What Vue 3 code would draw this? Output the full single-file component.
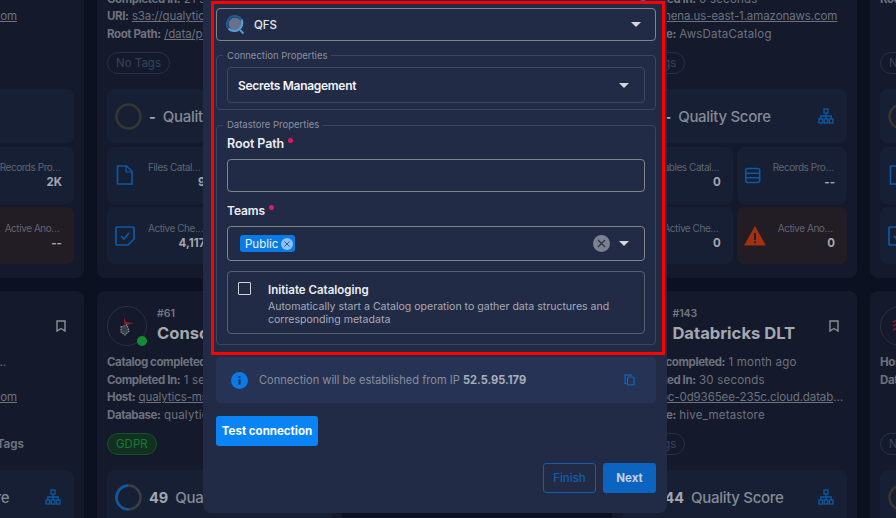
<template>
  <div class="page">
    <!-- cards behind the dialog -->
    <div class="grid">
      <div v-for="c in cards" :key="c.key" class="card" :style="{ gridColumn: c.col }">
        <div class="card__head">
          <div class="avatar">
            <svg v-if="c.logo === 'mssql'" width="18" height="20" viewBox="0 0 18 20">
              <path d="M6 1l2 5 8 1-6 2-4-1z" fill="#8a1c22" />
              <path d="M3 11l6-2 2 6-4 4-4-3z" fill="#3a3e4a" stroke="#8a8f99" stroke-width="1.200" stroke-dasharray="1.500 1" />
            </svg>
            <svg v-if="c.logo === 'stack'" width="18" height="18" viewBox="0 0 18 18">
              <path d="M2 5l7-3 7 3M2 9l7-3 7 3M2 13l7-3 7 3" fill="none" stroke="#7d1c22" stroke-width="1.600" />
            </svg>
            <span v-if="c.online" class="avatar__dot"></span>
          </div>
          <div class="card__name">
            <div class="card__id">{{ c.id }}</div>
            <div class="card__title">{{ c.title }}</div>
          </div>
          <svg class="bookmark" width="10" height="12" viewBox="0 0 10 12">
            <path d="M1 1h8v10L5 8.500 1 11z" fill="none" stroke="#8b8f98" stroke-width="1.400" />
          </svg>
        </div>

        <div class="card__lines">
          <div
            v-for="(l, i) in c.lines"
            :key="i"
            class="line"
            :style="c.pad ? { paddingRight: c.pad[i] + 'px', textAlign: 'right' } : null"
          >
            <b>{{ l[0] }}</b> <a v-if="l[2]">{{ l[1] }}</a><span v-else>{{ l[1] }}</span>
          </div>
        </div>

        <div class="card__tags" :style="{ paddingRight: c.tagPad ? c.tagPad + 'px' : null }">
          <span v-if="c.tag === 'GDPR'" class="tag tag--green">GDPR</span>
          <span v-else-if="c.tag === 'plain'" class="tag-plain">No Tags</span>
          <span v-else class="tag">No Tags</span>
        </div>

        <div class="tiles">
          <div class="tile tile--score">
            <svg width="27" height="27" viewBox="0 0 27 27">
              <circle cx="13.500" cy="13.500" r="12" fill="none" :stroke="c.score === '-' ? '#37372f' : '#3d3f45'" stroke-width="2.500" />
              <circle
                v-if="c.score !== '-'"
                cx="13.500"
                cy="13.500"
                r="12"
                fill="none"
                stroke="#0c5aa6"
                stroke-width="2.500"
                stroke-dasharray="37 76"
                transform="rotate(90 13.500 13.500)"
              />
            </svg>
            <span class="tile__score">{{ c.score }}</span>
            <span class="tile__quality">Quality Score</span>
            <svg v-if="!c.noTree" class="tree" width="16" height="16" viewBox="0 0 16 16">
              <g fill="none" stroke="#0c5aa6" stroke-width="1.300">
                <rect x="6" y="1" width="4" height="4" />
                <rect x="1" y="11" width="3.600" height="4" />
                <rect x="6.200" y="11" width="3.600" height="4" />
                <rect x="11.400" y="11" width="3.600" height="4" />
                <path d="M8 5v3M2.800 11V8h10.400v3M8 8v3" />
              </g>
            </svg>
          </div>
          <div v-for="t in c.tiles" :key="t.label" class="tile" :class="{ 'tile--danger': t.icon === 'warn' }">
            <svg v-if="t.icon === 'doc'" width="22" height="22" viewBox="0 0 22 22">
              <path d="M3.500 2h9l5.500 5.500V20h-14.500z" fill="none" stroke="#0c5aa6" stroke-width="1.600" />
              <path d="M12 2v6h6" fill="none" stroke="#0c5aa6" stroke-width="1.200" />
            </svg>
            <svg v-if="t.icon === 'check'" width="22" height="22" viewBox="0 0 22 22">
              <path d="M3 2h16a1 1 0 011 1v11l-6 6H3a1 1 0 01-1-1V3a1 1 0 011-1z" fill="none" stroke="#0c5aa6" stroke-width="1.700" />
              <path d="M7 11l3 3 5-6" fill="none" stroke="#0c5aa6" stroke-width="1.700" />
            </svg>
            <svg v-if="t.icon === 'list'" width="17" height="17" viewBox="0 0 17 17">
              <rect x="1.700" y="1.500" width="14" height="14" rx="2" fill="none" stroke="#0c5aa6" stroke-width="1.500" />
              <path d="M1.700 6.200h14M1.700 10.800h14" stroke="#0c5aa6" stroke-width="1.500" />
            </svg>
            <svg v-if="t.icon === 'warn'" width="22" height="20" viewBox="0 0 22 20">
              <path d="M11 0l11 19.500H0z" fill="#a2310f" />
              <path d="M10 7h2v7h-2zM10 15.200h2v2h-2z" fill="#2a1d22" />
            </svg>
            <div class="tile__text">
              <div class="tile__label">{{ t.label }}</div>
              <div class="tile__value">{{ t.value }}</div>
            </div>
          </div>
        </div>
      </div>
    </div>

    <!-- dialog -->
    <div class="overlay">
      <div class="modal">
        <span class="modal__step"></span>
        <div class="select select--source">
          <svg width="19" height="20" viewBox="0 0 19 20">
            <circle cx="9" cy="9" r="6.500" fill="#66728a" />
            <path d="M2.500 13.500A8 8 0 0 1 9 1a8 8 0 0 1 6.500 3.500" fill="none" stroke="#1b5c92" stroke-width="2.200" />
            <path d="M2.500 13.500A8 8 0 0 0 15.500 4.500" fill="none" stroke="#4f9fdc" stroke-width="2.200" />
            <path d="M14 15l3.500 3.500" stroke="#4f9fdc" stroke-width="2" />
          </svg>
          <span class="select__text">QFS</span>
          <i class="caret"></i>
        </div>

        <fieldset class="group group--first">
          <legend>Connection Properties</legend>
          <div class="select select--inner">
            <span class="select__strong">Secrets Management</span>
            <i class="caret"></i>
          </div>
        </fieldset>

        <fieldset class="group group--second">
          <legend>Datastore Properties</legend>
          <label class="field-label">Root Path <em></em></label>
          <input class="input" type="text" />
          <label class="field-label field-label--teams">Teams <em></em></label>
          <div class="select select--teams">
            <span class="chip">
              Public
              <span class="chip__x">
                <svg width="8" height="8" viewBox="0 0 8 8"><path d="M1.500 1.500l5 5M6.500 1.500l-5 5" stroke="#1c5fa8" stroke-width="1" /></svg>
              </span>
            </span>
            <span class="clear">
              <svg width="9" height="9" viewBox="0 0 9 9"><path d="M1 1l7 7M8 1L1 8" stroke="#2b3348" stroke-width="1.300" /></svg>
            </span>
            <i class="caret caret--teams"></i>
          </div>
          <div class="check-box">
            <span class="check-box__input"></span>
            <div>
              <div class="check-box__title">Initiate Cataloging</div>
              <div class="check-box__desc">Automatically start a Catalog operation to gather data structures and corresponding metadata</div>
            </div>
          </div>
        </fieldset>

        <div class="info">
          <svg width="17" height="17" viewBox="0 0 17 17">
            <circle cx="8.500" cy="8.500" r="8.500" fill="#0a7be6" />
            <path d="M7.500 7.200h2v5.500h-2zM7.500 4h2v2h-2z" fill="#1b2f55" />
          </svg>
          <span class="info__text">Connection will be established from IP <b>52.5.95.179</b></span>
          <svg class="info__copy" width="11" height="12" viewBox="0 0 11 12">
            <path d="M2.500 9.500H1V1h6v1" fill="none" stroke="#0a6ccb" stroke-width="1.100" />
            <rect x="3.500" y="3" width="6.500" height="8" rx="1" fill="none" stroke="#0a6ccb" stroke-width="1.100" />
          </svg>
        </div>

        <button class="btn btn--test" type="button">Test connection</button>

        <div class="actions">
          <button class="btn btn--finish" type="button">Finish</button>
          <button class="btn btn--next" type="button">Next</button>
        </div>

        <!-- red annotation round the form -->
        <div class="mark"></div>
      </div>
    </div>
  </div>
</template>

<script setup>
const tile = (icon, label, value) => ({ icon, label, value })

const cards = [
  {
    key: 'a1', col: 1, id: '#58', title: 'Sales Warehouse', score: '-', noTree: true, pad: [60, 60, 57, 60],
    lines: [
      ['', ''],
      ['', ''],
      ['Host:', 'qualytics.windows.com', true],
      ['', ''],
    ],
    tiles: [tile('', 'Tables Cataloged', '12'), tile('list', 'Records Profiled', '2K'), tile('', 'Active Checks', '31'), tile('warn', 'Active Anomalies', '--')],
  },
  {
    key: 'b1', col: 2, id: '#60', title: 'Quality Files', score: '-', online: true,
    lines: [
      ['Catalog completed:', '3 weeks ago'],
      ['Completed In:', '21 seconds'],
      ['URI:', 's3a://qualytics-demo-data', true],
      ['Root Path:', '/data/parquet', true],
    ],
    tiles: [tile('doc', 'Files Cataloged', '9'), tile('list', 'Records Profiled', '--'), tile('check', 'Active Checks', '4,117'), tile('warn', 'Active Anomalies', '0')],
  },
  {
    key: 'c1', col: 4, id: '#142', title: 'Athena', score: '-',
    lines: [
      ['Catalog completed:', '1 month ago'],
      ['Completed In:', '0 seconds'],
      ['Host:', 'athena.us-east-1.amazonaws.com', true],
      ['Database:', 'AwsDataCatalog'],
    ],
    tiles: [tile('list', 'Tables Cataloged', '0'), tile('list', 'Records Profiled', '--'), tile('check', 'Active Checks', '0'), tile('warn', 'Active Anomalies', '0')],
  },
  {
    key: 'd1', col: 5, id: '#144', title: 'Redshift', score: '-', logo: 'stack',
    lines: [
      ['', ''],
      ['Root Path:', '/data/raw', true],
      ['', ''],
      ['', ''],
    ],
    tiles: [tile('doc', 'Files Cataloged', '4'), tile('list', 'Records Profiled', '--'), tile('check', 'Active Checks', '8'), tile('warn', 'Active Anomalies', '0')],
  },
  {
    key: 'a2', col: 1, id: '#59', title: 'Orders', score: '52', tag: 'plain', tagPad: 50, pad: [62, 60, 57, 60],
    lines: [
      ['Catalog completed:', '2 days ago'],
      ['', ''],
      ['Host:', 'orders.database.com', true],
      ['', ''],
    ],
    tiles: [],
  },
  {
    key: 'b2', col: 2, id: '#61', title: 'Consolidated Balance', score: '49', tag: 'GDPR', logo: 'mssql', online: true,
    lines: [
      ['Catalog completed:', '1 week ago'],
      ['Completed In:', '1 second'],
      ['Host:', 'qualytics-mssql.database.net', true],
      ['Database:', 'qualytics'],
    ],
    tiles: [],
  },
  {
    key: 'c2', col: 4, id: '#143', title: 'Databricks DLT', score: '44',
    lines: [
      ['Catalog completed:', '1 month ago'],
      ['Completed In:', '30 seconds'],
      ['Host:', 'dbc-0d9365ee-235c.cloud.databricks.com', true],
      ['Database:', 'hive_metastore'],
    ],
    tiles: [],
  },
  {
    key: 'd2', col: 5, id: '#145', title: 'Delta', score: '-', logo: 'stack',
    lines: [
      ['Host:', 'delta.example.com', true],
      ['Database:', 'main'],
      ['', ''],
      ['', ''],
    ],
    tiles: [],
  },
]
</script>

<style>
html,
body {
  margin: 0;
  background: #0b1120;
  overflow: hidden;
}
</style>

<style scoped>
.page {
  position: relative;
  width: 896px;
  height: 518px;
  overflow: hidden;
  font-family: Inter, "Noto Sans", sans-serif;
  background: #0b1120;
}

/* background cards */
.grid {
  display: grid;
  grid-template-columns: repeat(5, 244.7px);
  grid-auto-rows: 368px;
  gap: 13px;
  margin-left: -160.700px;
  margin-top: -90px;
}
.card {
  box-sizing: border-box;
  padding: 15px 10px 0;
  background: #141a2b;
  border-radius: 8px;
  color: #6d727e;
}
.card__head {
  display: flex;
  align-items: center;
  height: 40px;
}
.avatar {
  position: relative;
  flex: none;
  width: 38px;
  height: 38px;
  border: 1px solid #2a3040;
  border-radius: 50%;
  display: flex;
  align-items: center;
  justify-content: center;
  margin-right: 10px;
}
.avatar__dot {
  position: absolute;
  right: -1px;
  bottom: -1px;
  width: 10px;
  height: 10px;
  border-radius: 50%;
  background: #178a36;
}
.card__name {
  flex: 1;
  min-width: 0;
}
.card__id {
  font-size: 10.500px;
  line-height: 14px;
  font-weight: 600;
  color: #727784;
}
.card__title {
  font-size: 16.600px;
  line-height: 24px;
  font-weight: 700;
  color: #a5a8af;
  white-space: nowrap;
}
.bookmark {
  flex: none;
  margin-right: 8px;
}
.card__lines {
  margin-top: 8px;
  height: 71px;
}
.line {
  font-size: 11.500px;
  line-height: 17.700px;
  height: 17.700px;
  white-space: nowrap;
  overflow: hidden;
  text-overflow: ellipsis;
  letter-spacing: 0.2px;
}
.line b {
  font-weight: 700;
  letter-spacing: -0.4px;
}
.line a {
  text-decoration: underline;
  letter-spacing: -0.1px;
}
.card__tags {
  height: 22px;
  margin-top: 8px;
  display: flex;
}
.tag {
  box-sizing: border-box;
  height: 22px;
  padding: 0 8px;
  border: 1px solid #283044;
  border-radius: 11px;
  font-size: 11.500px;
  line-height: 20px;
  color: #39425e;
}
.tag--green {
  color: #157a3a;
  background: #12301f;
  border-color: #15502c;
  padding: 0 8px;
  font-size: 11.500px;
}
.tag-plain {
  font-size: 11.500px;
  line-height: 22px;
  font-weight: 700;
  margin-left: auto;
}
.tiles {
  display: grid;
  grid-template-columns: 1fr 1fr;
  gap: 3.500px 4px;
  margin-top: 15px;
}
.tile {
  box-sizing: border-box;
  height: 57px;
  display: flex;
  align-items: center;
  gap: 12px;
  padding: 0 12px 0 7px;
  background: #171f35;
  border-radius: 7px;
  min-width: 0;
}
.tile--danger {
  background: #221c25;
}
.tile--score {
  grid-column: 1 / 3;
  height: 54px;
  padding: 0 13px 0 8px;
  gap: 7px;
}
.tile__score {
  font-size: 14.500px;
  font-weight: 700;
  color: #a3a7af;
}
.tile__quality {
  font-size: 15px;
  font-weight: 500;
  letter-spacing: -0.3px;
  color: #858a94;
  white-space: nowrap;
}
.tree {
  margin-left: auto;
}
.tile__text {
  flex: 1;
  min-width: 0;
  text-align: right;
}
.tile__label {
  font-size: 10px;
  line-height: 14px;
  letter-spacing: -0.45px;
  color: #5f6573;
  text-align: left;
  white-space: nowrap;
  overflow: hidden;
  text-overflow: ellipsis;
}
.tile__value {
  font-size: 11.500px;
  line-height: 16px;
  font-weight: 700;
  color: #a3a7af;
}

/* dialog */
.overlay {
  position: absolute;
  inset: 0;
  display: flex;
  align-items: flex-start;
}
.modal {
  position: relative;
  box-sizing: border-box;
  width: 464px;
  height: 512.500px;
  margin-left: 203px;
  padding: 8px 11px 0 13px;
  background: #222b45;
  border-radius: 0 0 8px 8px;
  color: #fff;
}
.modal__step {
  position: absolute;
  top: -9px;
  left: 435px;
  width: 10px;
  height: 10px;
  border-radius: 50%;
  background: #0a7be6;
}
.mark {
  position: absolute;
  left: 8px;
  top: 1px;
  width: 454px;
  height: 354px;
  box-sizing: border-box;
  border: 3px solid #f00;
  pointer-events: none;
}
.select {
  box-sizing: border-box;
  display: flex;
  align-items: center;
  border: 1px solid #80848c;
  border-radius: 4px;
}
.select--source {
  height: 33px;
  padding: 0 14px 0 9px;
}
.select__text {
  margin-left: 9px;
  font-size: 11.500px;
  font-weight: 500;
  color: #e4e6ea;
}
.select__strong {
  font-size: 12px;
  font-weight: 600;
  letter-spacing: -0.3px;
  color: #f2f3f5;
}
.caret {
  margin-left: auto;
  width: 0;
  height: 0;
  border-left: 5px solid transparent;
  border-right: 5px solid transparent;
  border-top: 5px solid #d5d7dc;
}
.group {
  box-sizing: border-box;
  margin: 0;
  padding: 0 10px;
  border: 1px solid #3c4560;
  border-radius: 4px;
  min-width: 0;
}
.group legend {
  margin-left: -4px;
  padding: 0 4px;
  font-size: 9.500px;
  line-height: 12px;
  color: #8a90a0;
}
.group--first {
  margin-top: 8.500px;
  height: 60px;
  padding-top: 5.500px;
}
.group--second {
  margin-top: 9.500px;
  height: 226px;
}
.select--inner {
  height: 36px;
  padding: 0 15px 0 10px;
  border-color: #3f4862;
}
.field-label {
  display: block;
  margin-top: 5px;
  font-size: 12.500px;
  line-height: 16px;
  font-weight: 600;
  letter-spacing: -0.1px;
  color: #eceef1;
}
.field-label em {
  display: inline-block;
  width: 5px;
  height: 5px;
  margin-left: 1px;
  border-radius: 50%;
  background: #e8175d;
  vertical-align: 5px;
}
.field-label--teams {
  margin-top: 11px;
  font-size: 12px;
}
.input {
  display: block;
  box-sizing: border-box;
  width: 100%;
  height: 33px;
  margin-top: 7px;
  background: transparent;
  border: 1px solid #80848c;
  border-radius: 4px;
}
.select--teams {
  height: 35px;
  margin-top: 7px;
  padding: 0 15px 0 12px;
}
.chip {
  display: flex;
  align-items: center;
  gap: 3px;
  height: 17px;
  padding: 0 2px 0 5px;
  background: #0a7be6;
  border-radius: 3px;
  font-size: 11.500px;
  color: #eef5fd;
}
.chip__x {
  display: flex;
  align-items: center;
  justify-content: center;
  width: 12px;
  height: 12px;
  border-radius: 50%;
  background: #8fc2f3;
}
.clear {
  display: flex;
  align-items: center;
  justify-content: center;
  width: 17px;
  height: 17px;
  margin-left: auto;
  border-radius: 50%;
  background: #7b8191;
}
.caret--teams {
  margin-left: 9px;
}
.check-box {
  box-sizing: border-box;
  display: flex;
  gap: 17px;
  height: 63px;
  margin-top: 10px;
  padding: 10px 10px 0;
  border: 1px solid #565e72;
  border-radius: 4px;
}
.check-box__input {
  flex: none;
  box-sizing: border-box;
  width: 13px;
  height: 13px;
  border: 1px solid #d0d2d8;
  border-radius: 1px;
}
.check-box__title {
  margin-top: 1px;
  font-size: 11.500px;
  line-height: 15px;
  font-weight: 600;
  color: #eceef1;
}
.check-box__desc {
  margin-top: 2px;
  font-size: 10.550px;
  line-height: 13px;
  color: #a6aab5;
}
.info {
  display: flex;
  align-items: center;
  gap: 11px;
  box-sizing: border-box;
  height: 46px;
  margin-top: 12px;
  padding: 0 21px 0 15px;
  background: #263354;
  border-radius: 4px;
}
.info__text {
  font-size: 11.100px;
  color: #878e9f;
}
.info__text b {
  font-weight: 700;
  color: #a9aeb9;
}
.info__copy {
  margin-left: auto;
}
.btn {
  display: block;
  box-sizing: border-box;
  height: 30px;
  padding: 0;
  border-radius: 3px;
  font-family: inherit;
  font-size: 11.500px;
  font-weight: 700;
  border: 0;
}
.btn--test {
  width: 102px;
  margin-top: 13px;
  background: #0a84f5;
  color: #fff;
}
.actions {
  display: flex;
  justify-content: flex-end;
  gap: 7px;
  margin-top: 17px;
}
.btn--finish {
  width: 53px;
  background: transparent;
  border: 1px solid #0f5fb0;
  color: #0f5fb0;
  font-weight: 500;
}
.btn--next {
  width: 53px;
  background: #0b64c0;
  color: #c6cfdc;
}
</style>
